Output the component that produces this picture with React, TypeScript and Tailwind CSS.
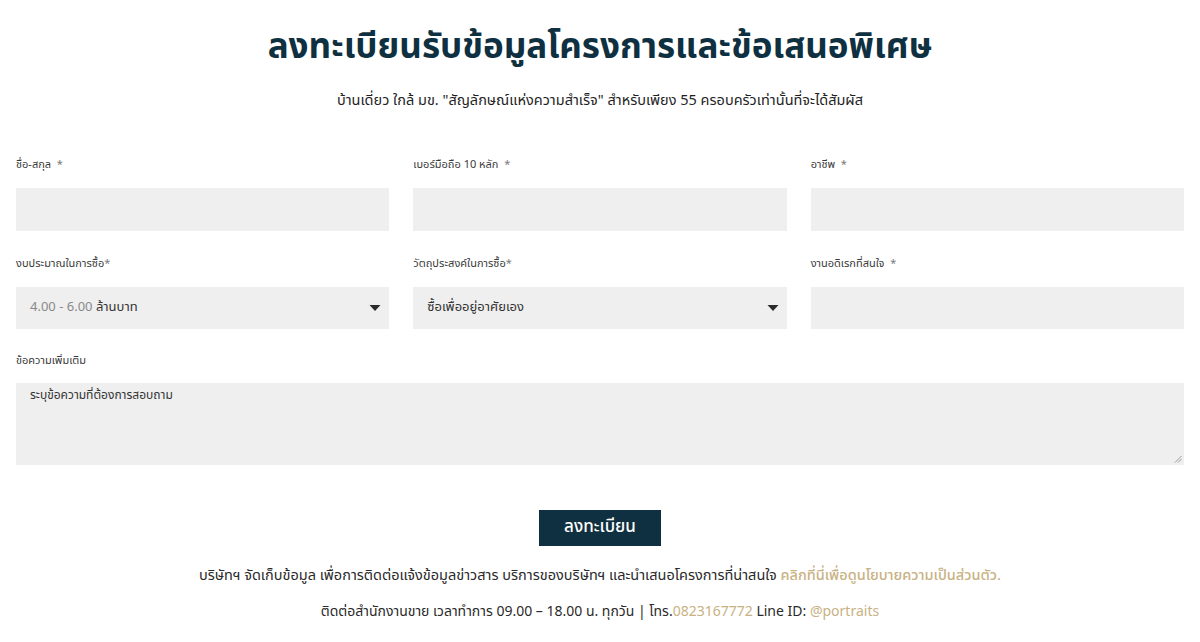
const FONT = { fontFamily: '"Noto Sans Thai", "Noto Sans", "Liberation Sans", sans-serif' };

function Label({ text, star }: { text: string; star?: 'space' | 'tight' }) {
  return (
    <label className="block text-[11px] text-[#3a3a3a] h-[23px] leading-[23px]">
      {text}
      {star === 'space' && <span className="text-[#7a7a7a]">&nbsp; *</span>}
      {star === 'tight' && <span className="text-[#7a7a7a]">*</span>}
    </label>
  );
}

function Caret() {
  return (
    <svg className="w-[12px] h-[8px]" viewBox="0 0 12 8">
      <path d="M0.5 1 L11.5 1 L6 7 Z" fill="#2b2b2b" />
    </svg>
  );
}

export default function App() {
  return (
    <div className="min-h-screen bg-white" style={FONT}>
      <div className="px-4 pt-[24px]">
        <h1 className="text-center text-[35px] font-bold text-[#0f3040] leading-[48px]">
          ลงทะเบียนรับข้อมูลโครงการและข้อเสนอพิเศษ
        </h1>
        <p className="text-center text-[14.5px] text-[#1f1f1f] mt-[18px] leading-[22px]">
          บ้านเดี่ยว ใกล้ มข. "สัญลักษณ์แห่งความสำเร็จ" สำหรับเพียง 55 ครอบครัวเท่านั้นที่จะได้สัมผัส
        </p>

        <div className="grid grid-cols-3 gap-x-6 mt-[41px]">
          <div>
            <Label text="ชื่อ-สกุล" star="space" />
            <div className="h-[43px] bg-[#efefef] mt-[12px]" />
          </div>
          <div>
            <Label text="เบอร์มือถือ 10 หลัก" star="space" />
            <div className="h-[43px] bg-[#efefef] mt-[12px]" />
          </div>
          <div>
            <Label text="อาชีพ" star="space" />
            <div className="h-[43px] bg-[#efefef] mt-[12px]" />
          </div>
        </div>

        <div className="grid grid-cols-3 gap-x-6 mt-[21px]">
          <div>
            <Label text="งบประมาณในการซื้อ" star="tight" />
            <div className="h-[42px] bg-[#efefef] mt-[12px] flex items-center justify-between pl-[14px] pr-[8px] text-[13px]">
              <span>
                <span className="text-[#8a8a8a]">4.00 - 6.00 </span>
                <span className="text-[#333]">ล้านบาท</span>
              </span>
              <Caret />
            </div>
          </div>
          <div>
            <Label text="วัตถุประสงค์ในการซื้อ" star="tight" />
            <div className="h-[42px] bg-[#efefef] mt-[12px] flex items-center justify-between pl-[14px] pr-[8px] text-[13px] text-[#333]">
              <span>ซื้อเพื่ออยู่อาศัยเอง</span>
              <Caret />
            </div>
          </div>
          <div>
            <Label text="งานอดิเรกที่สนใจ" star="space" />
            <div className="h-[42px] bg-[#efefef] mt-[12px]" />
          </div>
        </div>

        <div className="mt-[20px]">
          <Label text="ข้อความเพิ่มเติม" />
          <div className="relative h-[82px] bg-[#efefef] mt-[11px] px-[14px] py-[3px] text-[12px] text-[#333]">
            ระบุข้อความที่ต้องการสอบถาม
            <svg className="absolute right-[2px] bottom-[2px] w-[8px] h-[8px]" viewBox="0 0 8 8">
              <path d="M7.5 1 L1 7.5 M7.5 4 L4 7.5" stroke="#999" strokeWidth="1" />
            </svg>
          </div>
        </div>

        <div className="flex justify-center mt-[45px]">
          <button className="w-[122px] h-[36px] bg-[#0f3040] text-white text-[17px] font-medium">
            ลงทะเบียน
          </button>
        </div>

        <p className="text-center text-[14.5px] text-[#2a2a2a] mt-[18px] leading-[24px]">
          บริษัทฯ จัดเก็บข้อมูล เพื่อการติดต่อแจ้งข้อมูลข่าวสาร บริการของบริษัทฯ และนำเสนอโครงการที่น่าสนใจ{' '}
          <span className="text-[#c8b283] font-medium">คลิกที่นี่เพื่อดูนโยบายความเป็นส่วนตัว.</span>
        </p>
        <p className="text-center text-[14px] text-[#2a2a2a] mt-[12px] leading-[24px]">
          ติดต่อสำนักงานขาย เวลาทำการ 09.00 – 18.00 น. ทุกวัน | โทร.<span className="text-[#c8b283]">0823167772</span> Line ID: <span className="text-[#c8b283]">@portraits</span>
        </p>
      </div>
    </div>
  );
}
